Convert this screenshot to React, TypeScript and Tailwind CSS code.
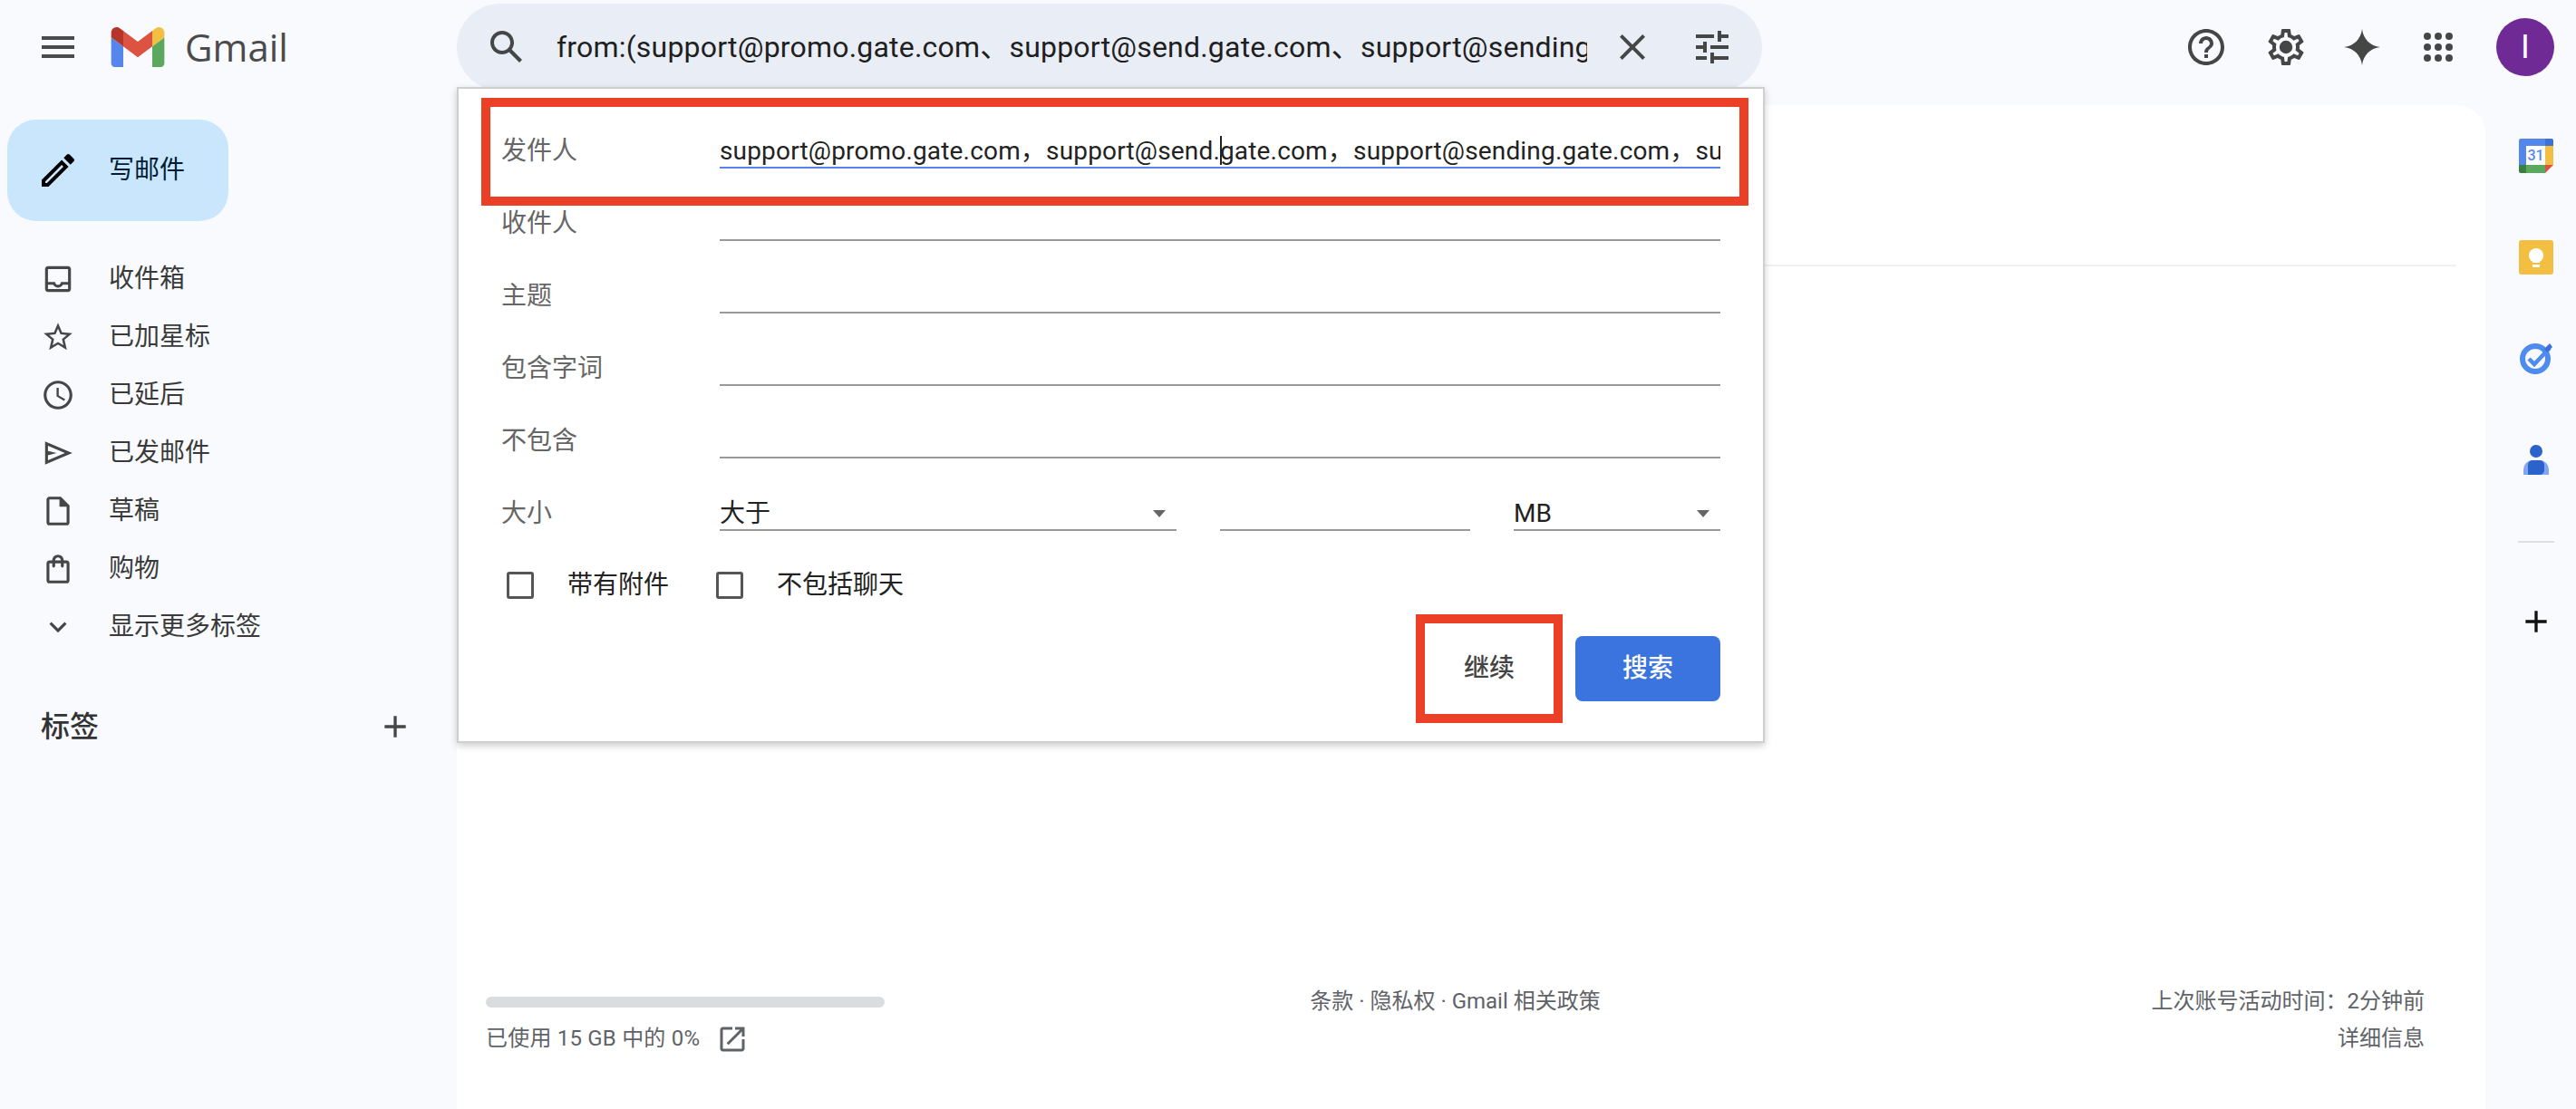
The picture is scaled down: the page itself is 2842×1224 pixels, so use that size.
import React from "react";

const P = ({ d, size = 48, className = "" }: { d: string; size?: number; className?: string }) => (
  <svg width={size} height={size} viewBox="0 0 24 24" className={`shrink-0 fill-current ${className}`}>
    <path d={d} />
  </svg>
);

const I = {
  menu: "M3 18h18v-2H3v2zm0-5h18v-2H3v2zm0-7v2h18V6H3z",
  edit: "M3 17.25V21h3.75L17.81 9.94l-3.75-3.75L3 17.25zM5.92 19H5v-.92l9.06-9.06.92.92L5.92 19zM20.71 5.63l-2.34-2.34c-.2-.2-.45-.29-.71-.29s-.51.1-.7.29l-1.83 1.83 3.75 3.75 1.83-1.83c.39-.39.39-1.02 0-1.41z",
  inbox: "M19 3H5c-1.1 0-2 .9-2 2v14c0 1.1.9 2 2 2h14c1.1 0 2-.9 2-2V5c0-1.1-.9-2-2-2zm0 16H5v-3h3.56c.69 1.19 1.97 2 3.44 2s2.75-.81 3.44-2H19v3zm0-5h-4.99c0 1.1-.9 2-2 2s-2-.9-2-2H5V5h14v9z",
  star: "M22 9.24l-7.19-.62L12 2 9.19 8.63 2 9.24l5.46 4.73L5.82 21 12 17.27 18.18 21l-1.63-7.03L22 9.24zM12 15.4l-3.76 2.27 1-4.28-3.32-2.88 4.38-.38L12 6.1l1.71 4.04 4.38.38-3.32 2.88 1 4.28L12 15.4z",
  clock: "M11.99 2C6.47 2 2 6.48 2 12s4.47 10 9.99 10C17.52 22 22 17.52 22 12S17.52 2 11.99 2zM12 20c-4.42 0-8-3.58-8-8s3.58-8 8-8 8 3.58 8 8-3.58 8-8 8zm.5-13H11v6l5.25 3.15.75-1.23-4.5-2.67z",
  send: "M3 20V4l19 8zm2-3 11.85-5L5 7v3.5l6 1.5-6 1.5z",
  draft: "M6 2c-1.1 0-2 .9-2 2v16c0 1.1.9 2 2 2h12c1.1 0 2-.9 2-2V8l-6-6H6zm0 2h7v5h5v11H6V4z",
  bag: "M18 6h-2c0-2.21-1.79-4-4-4S8 3.79 8 6H6c-1.1 0-2 .9-2 2v12c0 1.1.9 2 2 2h12c1.1 0 2-.9 2-2V8c0-1.1-.9-2-2-2zm-6-2c1.1 0 2 .9 2 2h-4c0-1.1.9-2 2-2zm6 16H6V8h2v2c0 .55.45 1 1 1s1-.45 1-1V8h4v2c0 .55.45 1 1 1s1-.45 1-1V8h2v12z",
  chevron: "M16.59 8.59L12 13.17 7.41 8.59 6 10l6 6 6-6z",
  plus: "M19 13h-6v6h-2v-6H5v-2h6V5h2v6h6v2z",
  search: "M20.49 19l-5.73-5.73C15.53 12.2 16 10.91 16 9.5 16 5.91 13.09 3 9.5 3S3 5.91 3 9.5 5.91 16 9.5 16c1.41 0 2.7-.47 3.77-1.24L19 20.49 20.49 19zM5 9.5C5 7.01 7.01 5 9.5 5S14 7.01 14 9.5 11.99 14 9.5 14 5 11.99 5 9.5z",
  close: "M19 6.41L17.59 5 12 10.59 6.41 5 5 6.41 10.59 12 5 17.59 6.41 19 12 13.41 17.59 19 19 17.59 13.41 12z",
  tune: "M3 17v2h6v-2H3zM3 5v2h10V5H3zm10 16v-2h8v-2h-8v-2h-2v6h2zM7 9v2H3v2h4v2h2V9H7zm14 4v-2H11v2h10zm-6-4h2V7h4V5h-4V3h-2v6z",
  help: "M11 18h2v-2h-2v2zm1-16C6.48 2 2 6.48 2 12s4.48 10 10 10 10-4.48 10-10S17.52 2 12 2zm0 18c-4.41 0-8-3.59-8-8s3.59-8 8-8 8 3.59 8 8-3.59 8-8 8zm0-14c-2.21 0-4 1.79-4 4h2c0-1.1.9-2 2-2s2 .9 2 2c0 2-3 1.75-3 5h2c0-2.25 3-2.5 3-5 0-2.21-1.79-4-4-4z",
  gear: "M19.43 12.98c.04-.32.07-.64.07-.98 0-.34-.03-.66-.07-.98l2.11-1.65c.19-.15.24-.42.12-.64l-2-3.46c-.09-.16-.26-.25-.44-.25-.06 0-.12.01-.17.03l-2.49 1c-.52-.4-1.08-.73-1.69-.98l-.38-2.65C14.46 2.18 14.25 2 14 2h-4c-.25 0-.46.18-.49.42l-.38 2.65c-.61.25-1.17.59-1.69.98l-2.49-1c-.06-.02-.12-.03-.18-.03-.17 0-.34.09-.43.25l-2 3.46c-.13.22-.07.49.12.64l2.11 1.65c-.04.32-.07.65-.07.98 0 .33.03.66.07.98l-2.11 1.65c-.19.15-.24.42-.12.64l2 3.46c.09.16.26.25.44.25.06 0 .12-.01.17-.03l2.49-1c.52.4 1.08.73 1.69.98l.38 2.65c.03.24.24.42.49.42h4c.25 0 .46-.18.49-.42l.38-2.65c.61-.25 1.17-.59 1.69-.98l2.49 1c.06.02.12.03.18.03.17 0 .34-.09.43-.25l2-3.46c.12-.22.07-.49-.12-.64l-2.11-1.65zm-1.98-1.71c.04.31.05.52.05.73 0 .21-.02.43-.05.73l-.14 1.13.89.7 1.08.84-.7 1.21-1.27-.51-1.04-.42-.9.68c-.43.32-.84.56-1.25.73l-1.06.43-.16 1.13-.2 1.35h-1.4l-.19-1.35-.16-1.13-1.06-.43c-.43-.18-.83-.41-1.23-.71l-.91-.7-1.06.43-1.27.51-.7-1.21 1.08-.84.89-.7-.14-1.13c-.03-.31-.05-.54-.05-.74s.02-.43.05-.73l.14-1.13-.89-.7-1.08-.84.7-1.21 1.27.51 1.04.42.9-.68c.43-.32.84-.56 1.25-.73l1.06-.43.16-1.13.2-1.35h1.39l.19 1.35.16 1.13 1.06.43c.43.18.83.41 1.23.71l.91.7 1.06-.43 1.27-.51.7 1.21-1.07.85-.89.7.14 1.13zM12 8.4a3.6 3.6 0 1 0 0 7.2 3.6 3.6 0 0 0 0-7.2z",
  spark: "M12 2C12.6 7.5 16.5 11.4 22 12 16.5 12.6 12.6 16.5 12 22 11.4 16.5 7.5 12.6 2 12 7.5 11.4 11.4 7.5 12 2z",
  open: "M19 19H5V5h7V3H5c-1.11 0-2 .9-2 2v14c0 1.1.89 2 2 2h14c1.1 0 2-.9 2-2v-7h-2v7zM14 3v2h3.59l-9.83 9.83 1.41 1.41L19 6.41V10h2V3h-7z",
};

const nav: [string, string][] = [
  [I.inbox, "收件箱"],
  [I.star, "已加星标"],
  [I.clock, "已延后"],
  [I.send, "已发邮件"],
  [I.draft, "草稿"],
  [I.bag, "购物"],
  [I.chevron, "显示更多标签"],
];

const GmailLogo = () => (
  <svg width="60" height="44" viewBox="52 42 88 66" className="shrink-0">
    <path fill="#5586ec" d="M58 108h14V74L52 59v43c0 3.32 2.69 6 6 6" />
    <path fill="#5ba85f" d="M120 108h14c3.32 0 6-2.69 6-6V59l-20 15" />
    <path fill="#f3bf42" d="M120 48v26l20-15v-8c0-7.42-8.47-11.65-14.4-7.2" />
    <path fill="#dc5341" d="M72 74V48l24 18 24-18v26L96 92" />
    <path fill="#b5352a" d="M52 51v8l20 15V48l-5.6-4.2c-5.94-4.45-14.4-.22-14.4 7.2" />
  </svg>
);

const Apps = () => (
  <svg width="48" height="48" viewBox="0 0 24 24" className="shrink-0 fill-current">
    {[6, 12, 18].map((y) =>
      [6, 12, 18].map((x) => <circle key={`${x}-${y}`} cx={x} cy={y} r="2" />)
    )}
  </svg>
);

const Calendar = () => (
  <svg width="38" height="38" viewBox="0 0 38 38" className="shrink-0">
    <path fill="#5586ec" d="M2 0h27v8H8v21H0V2a2 2 0 0 1 2-2z" />
    <path fill="#3f70d8" d="M29 0h7a2 2 0 0 1 2 2v6h-9z" />
    <path fill="#f3bf42" d="M29 8h9v21h-9z" />
    <path fill="#5ba85f" d="M8 29h21v9H8z" />
    <path fill="#3b8043" d="M0 29h8v9H2a2 2 0 0 1-2-2z" />
    <path fill="#dc5341" d="M29 29h9l-9 9z" />
    <path fill="#fff" d="M8 8h21v21H8z" />
    <text x="18.500" y="24" textAnchor="middle" fontSize="16" fontWeight="500" fill="#5586ec" fontFamily="Roboto">31</text>
  </svg>
);

const Keep = () => (
  <svg width="38" height="38" viewBox="0 0 38 38" className="shrink-0">
    <rect width="38" height="38" rx="3" fill="#f3bf42" />
    <circle cx="19" cy="17" r="8" fill="#fff" />
    <path fill="#fff" d="M15 21h8v4h-8zM15 27h8v3h-8z" />
  </svg>
);

const Tasks = () => (
  <svg width="36" height="34" viewBox="0 0 36 34" className="shrink-0">
    <circle cx="17" cy="17" r="14" fill="none" stroke="#4d8bf0" strokeWidth="6" />
    <path d="M10 17l6 6 17-18" fill="none" stroke="#4d8bf0" strokeWidth="4.500" />
    <path d="M27 6l6-6 3 4-6 6z" fill="#3f70d8" />
  </svg>
);

const Contacts = () => (
  <svg width="28" height="33" viewBox="0 0 28 33" className="shrink-0">
    <circle cx="14" cy="7" r="7" fill="#2c62cc" />
    <path d="M0 33v-6a10 10 0 0 1 10-10h8a10 10 0 0 1 10 10v6z" fill="#84a6f0" />
    <path d="M5 33V22a5 5 0 0 1 5-5h8a5 5 0 0 1 5 5v6a5 5 0 0 1-5 5z" fill="#2c62cc" />
  </svg>
);

const Field = ({ label }: { label: string }) => (
  <div className="flex h-[80px] items-end">
    <div className="-ml-[2px] w-[241px] pb-[2px] text-[28px] leading-[34px] text-[#666]">{label}</div>
    <div className="h-[36px] flex-1 border-b-2 border-[#9a9a9a]" />
  </div>
);

const Caret = () => <span className="mb-[1px] h-0 w-0 border-x-[7px] border-t-[8px] border-x-transparent border-t-[#666]" />;

const Check = ({ label }: { label: string }) => (
  <div className="flex items-center gap-[37px]">
    <span className="h-[30px] w-[30px] rounded-[3px] border-[3px] border-[#555]" />
    <span className="text-[28px] leading-[32px] text-[#222]">{label}</span>
  </div>
);

export default function App() {
  return (
    <div className="relative flex h-[1224px] w-[2842px] flex-col overflow-hidden bg-[#f8fafd] [font-family:Roboto,'Noto_Sans_CJK_SC',sans-serif]">
      <header className="flex h-[104px] shrink-0 items-center">
        <div className="flex w-[504px] shrink-0 items-center">
          <P d={I.menu} className="ml-[40px] text-[#4a4b4a]" />
          <div className="ml-[34px]"><GmailLogo /></div>
          <span className="ml-[22px] text-[42px] leading-[52px] text-[#4a4b4a] [font-family:'Open_Sans',sans-serif]">Gmail</span>
        </div>

        <div className="relative flex h-[96px] w-[1440px] shrink-0 items-center rounded-[48px] bg-[#e9eef6] text-[#444746]">
          <P d={I.search} className="ml-[31px]" />
          <div className="ml-[31px] w-[1137px] overflow-hidden whitespace-nowrap text-[32px] leading-[44px] tracking-[0.2px] text-[#1f1f1f]">
            from:(support@promo.gate.com、support@send.gate.com、support@sending.gate.com、support@mail.gate.com)
          </div>
          <P d={I.close} className="ml-[26px]" />
          <P d={I.tune} className="ml-[40px]" />

          <div className="absolute left-0 top-[92px] z-10 w-[1443px] border-2 border-[#cfcfcf] bg-white pb-[44px] pl-[49px] pr-[47px] pt-[8px] shadow-[0_3px_8px_rgba(0,0,0,0.2)]">
            <div className="absolute left-[25px] top-[10px] h-[119px] w-[1398px] border-[10px] border-[#ec4026]" />

            <div className="flex h-[80px] items-end">
              <div className="-ml-[2px] w-[241px] pb-[2px] text-[28px] leading-[34px] text-[#666]">发件人</div>
              <div className="h-[36px] min-w-0 flex-1 overflow-hidden whitespace-nowrap border-b-2 border-[#5585e8] text-[28px] leading-[34px] tracking-[0.17px] text-[#222]">
                support@promo.gate.com，support@send.
                <span className="relative">
                  <span className="absolute left-0 top-[-4px] h-[36px] w-[2px] bg-[#222]" />
                </span>
                gate.com，support@sending.gate.com，support@mail.gate.com
              </div>
            </div>
            <Field label="收件人" />
            <Field label="主题" />
            <Field label="包含字词" />
            <Field label="不包含" />

            <div className="flex h-[80px] items-end">
              <div className="-ml-[2px] w-[241px] pb-[2px] text-[28px] leading-[34px] text-[#666]">大小</div>
              <div className="flex h-[36px] w-[504px] items-center justify-between border-b-2 border-[#9a9a9a] pr-[12px] text-[28px] leading-[34px] text-[#222]">
                <span>大于</span>
                <Caret />
              </div>
              <div className="ml-[48px] h-[36px] w-[276px] border-b-2 border-[#9a9a9a]" />
              <div className="ml-[48px] flex h-[36px] flex-1 items-center justify-between border-b-2 border-[#9a9a9a] pr-[12px] text-[28px] leading-[34px] text-[#222]">
                <span>MB</span>
                <Caret />
              </div>
            </div>

            <div className="mt-[44px] flex items-center gap-[52px] pl-[4px]">
              <Check label="带有附件" />
              <Check label="不包括聊天" />
            </div>

            <div className="mt-[40px] flex items-center justify-end gap-[23px]">
              <div className="relative flex h-[72px] w-[144px] items-center justify-center text-[28px] font-medium text-[#444]">
                继续
                <div className="absolute -bottom-[24px] -left-[9px] -right-[9px] -top-[24px] border-[10px] border-[#ec4026]" />
              </div>
              <div className="flex h-[72px] w-[160px] items-center justify-center rounded-[8px] bg-[#3b74de] text-[28px] font-medium text-white">
                搜索
              </div>
            </div>
          </div>
        </div>

        <div className="flex items-center text-[#444746]">
          <P d={I.help} className="ml-[466px]" />
          <P d={I.gear} className="ml-[40px]" />
          <P d={I.spark} className="ml-[36px]" />
          <div className="ml-[36px]"><Apps /></div>
          <div className="ml-[40px] flex h-[64px] w-[64px] items-center justify-center rounded-full bg-[#702a96] text-[36px] text-white">I</div>
        </div>
      </header>

      <div className="flex min-h-0 flex-1">
        <aside className="w-[504px] shrink-0 pt-[28px]">
          <div className="ml-[8px] flex h-[112px] w-[244px] items-center rounded-[32px] bg-[#c9e6fc] text-[#001d35]">
            <P d={I.edit} className="ml-[32px] text-black" />
            <span className="ml-[32px] text-[28px]">写邮件</span>
          </div>
          <nav className="mt-[32px]">
            {nav.map(([d, t]) => (
              <div key={t} className="flex h-[64px] items-center pl-[45px]">
                <P d={d} size={38} className="text-[#444746]" />
                <span className="ml-[37px] text-[28px] text-[#3a3a3a]">{t}</span>
              </div>
            ))}
          </nav>
          <div className="mt-[54px] flex h-[48px] items-center justify-between pl-[45px] pr-[48px]">
            <span className="text-[32px] font-medium text-[#333]">标签</span>
            <P d={I.plus} size={40} className="text-[#444746]" />
          </div>
        </aside>

        <main className="mt-[12px] flex w-[2238px] shrink-0 flex-col rounded-t-[32px] bg-white">
          <div className="mr-[32px] mt-[176px] h-[2px] bg-[#f0f0f0]" />
          <footer className="mt-auto grid grid-cols-3 pb-[57px] pl-[32px] pr-[67px] text-[24px] leading-[41px] text-[#5f6368]">
            <div>
              <div className="mt-[15px] h-[12px] w-[440px] rounded-full bg-[#dadce0]" />
              <div className="mt-[14px] flex items-center">
                <span className="tracking-[0.2px]">已使用 15 GB 中的 0%</span>
                <P d={I.open} size={36} className="ml-[18px] text-[#5f6368]" />
              </div>
            </div>
            <div className="text-center">条款 · 隐私权 · Gmail 相关政策</div>
            <div className="text-right">
              <div>上次账号活动时间：2分钟前</div>
              <div>详细信息</div>
            </div>
          </footer>
        </main>

        <aside className="flex w-[100px] shrink-0 flex-col items-center pl-[12px] pt-[49px]">
          <Calendar />
          <div className="mt-[74px]"><Keep /></div>
          <div className="mt-[76px]"><Tasks /></div>
          <div className="mt-[78px]"><Contacts /></div>
          <div className="mt-[73px] h-[2px] w-[40px] bg-[#e0e0e0]" />
          <P d={I.plus} size={40} className="mt-[67px] text-[#111]" />
        </aside>
      </div>
    </div>
  );
}
